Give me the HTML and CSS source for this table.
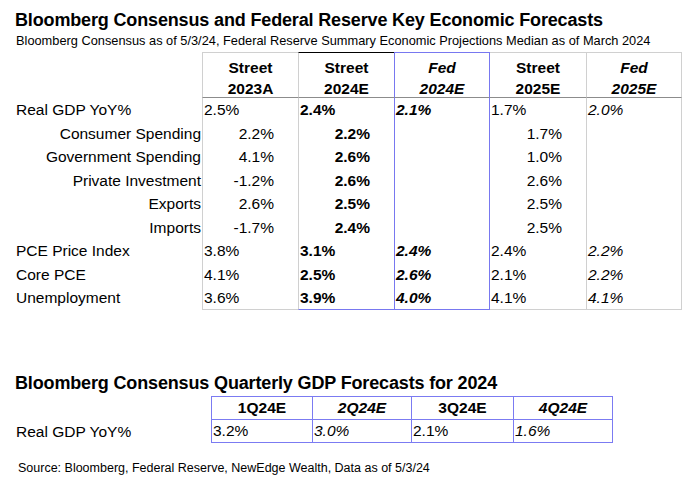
FILE: index.html
```html
<!DOCTYPE html>
<html>
<head>
<meta charset="utf-8">
<link rel="stylesheet" href="styles.css">
</head>
<body>
<div class="page">
  <h1 class="title">Bloomberg Consensus and Federal Reserve Key Economic Forecasts</h1>
  <p class="subtitle">Bloomberg Consensus as of 5/3/24, Federal Reserve Summary Economic Projections Median as of March 2024</p>

  <div class="grid1">
    <div class="lab"></div>
    <div class="hd c1">Street<br>2023A</div>
    <div class="hd c2">Street<br>2024E</div>
    <div class="hd c3 it">Fed<br>2024E</div>
    <div class="hd c4">Street<br>2025E</div>
    <div class="hd c5 it">Fed<br>2025E</div>

    <div class="lab">Real GDP YoY%</div>
    <div class="v c1">2.5%</div>
    <div class="v c2 b">2.4%</div>
    <div class="v c3 bi">2.1%</div>
    <div class="v c4">1.7%</div>
    <div class="v c5 i">2.0%</div>

    <div class="lab sublab">Consumer Spending</div>
    <div class="v sub c1">2.2%</div>
    <div class="v sub c2 b">2.2%</div>
    <div class="v sub c3"></div>
    <div class="v sub c4">1.7%</div>
    <div class="v sub c5"></div>

    <div class="lab sublab">Government Spending</div>
    <div class="v sub c1">4.1%</div>
    <div class="v sub c2 b">2.6%</div>
    <div class="v sub c3"></div>
    <div class="v sub c4">1.0%</div>
    <div class="v sub c5"></div>

    <div class="lab sublab">Private Investment</div>
    <div class="v sub c1">-1.2%</div>
    <div class="v sub c2 b">2.6%</div>
    <div class="v sub c3"></div>
    <div class="v sub c4">2.6%</div>
    <div class="v sub c5"></div>

    <div class="lab sublab">Exports</div>
    <div class="v sub c1">2.6%</div>
    <div class="v sub c2 b">2.5%</div>
    <div class="v sub c3"></div>
    <div class="v sub c4">2.5%</div>
    <div class="v sub c5"></div>

    <div class="lab sublab">Imports</div>
    <div class="v sub c1">-1.7%</div>
    <div class="v sub c2 b">2.4%</div>
    <div class="v sub c3"></div>
    <div class="v sub c4">2.5%</div>
    <div class="v sub c5"></div>

    <div class="lab">PCE Price Index</div>
    <div class="v c1">3.8%</div>
    <div class="v c2 b">3.1%</div>
    <div class="v c3 bi">2.4%</div>
    <div class="v c4">2.4%</div>
    <div class="v c5 i">2.2%</div>

    <div class="lab">Core PCE</div>
    <div class="v c1">4.1%</div>
    <div class="v c2 b">2.5%</div>
    <div class="v c3 bi">2.6%</div>
    <div class="v c4">2.1%</div>
    <div class="v c5 i">2.2%</div>

    <div class="lab">Unemployment</div>
    <div class="v c1 last">3.6%</div>
    <div class="v c2 b last">3.9%</div>
    <div class="v c3 bi last">4.0%</div>
    <div class="v c4 last">4.1%</div>
    <div class="v c5 i last">4.1%</div>
  </div>

  <h2 class="title2">Bloomberg Consensus Quarterly GDP Forecasts for 2024</h2>

  <div class="grid2">
    <div class="lab"></div>
    <div class="qh">1Q24E</div>
    <div class="qh it">2Q24E</div>
    <div class="qh">3Q24E</div>
    <div class="qh it qlast">4Q24E</div>

    <div class="lab">Real GDP YoY%</div>
    <div class="qv">3.2%</div>
    <div class="qv i">3.0%</div>
    <div class="qv">2.1%</div>
    <div class="qv i qlast">1.6%</div>
  </div>

  <p class="source">Source: Bloomberg, Federal Reserve, NewEdge Wealth, Data as of 5/3/24</p>
</div>
</body>
</html>
```

FILE: styles.css
```css
* { box-sizing: border-box; }

body {
  margin: 0;
  background: #ffffff;
  color: #000000;
  font-family: "Liberation Sans", Arial, sans-serif;
}

.page {
  display: flex;
  flex-direction: column;
  width: 695px;
  height: 489px;
}

.title {
  margin: 8px 0 0 0;
  padding-left: 15px;
  font-size: 18px;
  letter-spacing: -0.15px;
  line-height: 24px;
  font-weight: bold;
}

.subtitle {
  margin: 0;
  padding-left: 16px;
  font-size: 12.8px;
  line-height: 18px;
}

.grid1 {
  margin-top: 2px;
  display: grid;
  grid-template-columns: 202px 96px 96px 96px 96px 96px;
  grid-template-rows: 46px repeat(9, 23.5px);
  font-size: 15.5px;
}

.lab {
  padding-left: 16px;
  line-height: 23.5px;
  font-size: 15.5px;
  white-space: nowrap;
}

.sublab {
  text-align: right;
  padding-right: 1px;
}

.hd {
  text-align: center;
  font-weight: bold;
  font-size: 15.5px;
  line-height: 21px;
  padding-top: 4px;
  border-top: 1px solid #d0d0d0;
  border-bottom: 1px solid #8c8c8c;
}

.hd.c2 { border-top-color: #000000; }
.hd.c3 { border-top-color: #7878f0; }

.it { font-style: italic; }

.v {
  line-height: 23.5px;
  padding-left: 1px;
  white-space: nowrap;
}

.sub {
  text-align: right;
  padding-right: 24px;
}

.c1 { border-left: 1px solid #d0d0d0; }
.c2 { border-left: 1px solid #d0d0d0; }
.c3 { border-left: 1px solid #7878f0; border-right: 1px solid #7878f0; }
.c5 { border-left: 1px solid #d0d0d0; border-right: 1px solid #d0d0d0; }

.last { border-bottom: 1px solid #d0d0d0; }
.last.c2, .last.c3 { border-bottom-color: #7878f0; }

.b { font-weight: bold; }
.bi { font-weight: bold; font-style: italic; }
.i { font-style: italic; }

.title2 {
  margin: 61px 0 0 0;
  padding-left: 15px;
  font-size: 18px;
  letter-spacing: -0.15px;
  line-height: 24px;
  font-weight: bold;
}

.grid2 {
  margin-top: 1px;
  display: grid;
  grid-template-columns: 211px 101px 99px 102px 100px;
  grid-template-rows: 24px 23px;
  font-size: 15.5px;
}

.grid2 .lab { line-height: 23px; }

.qh {
  text-align: center;
  font-weight: bold;
  font-size: 15.5px;
  line-height: 22px;
  border-top: 1px solid #7b7bf2;
  border-left: 1px solid #7b7bf2;
  border-bottom: 1px solid #7b7bf2;
}

.qv {
  line-height: 22px;
  padding-left: 1px;
  border-left: 1px solid #7b7bf2;
  border-bottom: 1px solid #7b7bf2;
}

.qlast { border-right: 1px solid #7b7bf2; }

.source {
  margin: 17px 0 0 0;
  padding-left: 18px;
  font-size: 12.5px;
  line-height: 16px;
}
```
